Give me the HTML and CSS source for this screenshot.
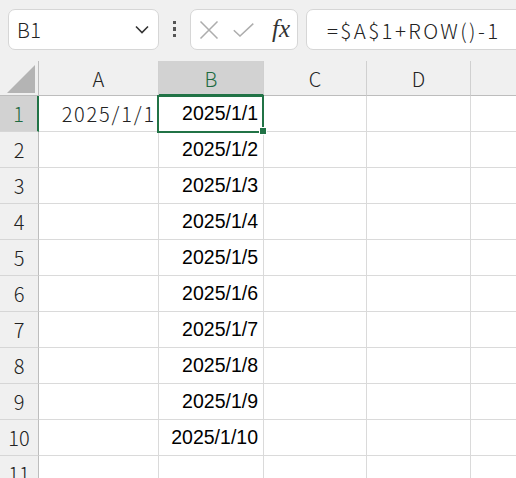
FILE: index.html
```html
<!DOCTYPE html>
<html lang="ja">
<head>
<meta charset="utf-8">
<link rel="stylesheet" href="styles.css">
</head>
<body>
<div class="app">
  <div class="topbar">
    <div class="namebox">
      <span class="name">B1</span>
      <svg class="chev" width="14" height="9" viewBox="0 0 14 9"><path d="M1 1.5 L7 7.5 L13 1.5" fill="none" stroke="#333" stroke-width="1.6"/></svg>
    </div>
    <div class="dots"><i></i><i></i><i></i></div>
    <div class="btnbox">
      <svg class="xicon" width="20" height="18" viewBox="0 0 20 18"><path d="M1.5 0.5 L18.5 17.5 M18.5 0.5 L1.5 17.5" stroke="#adadad" stroke-width="1.5" fill="none"/></svg>
      <svg class="ckicon" width="21" height="14" viewBox="0 0 21 14"><path d="M0.8 7.2 L7 13 L20.3 0.6" stroke="#adadad" stroke-width="1.5" fill="none"/></svg>
      <span class="fx">fx</span>
    </div>
    <div class="formula">=$A$1+ROW()-1</div>
  </div>
  <div class="sheet">
    <div class="corner"><span class="tri"></span></div>
    <div class="ch">A</div>
    <div class="ch sel">B</div>
    <div class="ch">C</div>
    <div class="ch">D</div>
    <div class="ch last"></div>

    <div class="rh sel">1</div>
    <div class="c jp">2025/1/1</div>
    <div class="c b active">2025/1/1<span class="ring"></span><span class="handle"></span></div>
    <div class="c"></div><div class="c"></div><div class="c last"></div>

    <div class="rh">2</div><div class="c"></div><div class="c b">2025/1/2</div><div class="c"></div><div class="c"></div><div class="c last"></div>
    <div class="rh">3</div><div class="c"></div><div class="c b">2025/1/3</div><div class="c"></div><div class="c"></div><div class="c last"></div>
    <div class="rh">4</div><div class="c"></div><div class="c b">2025/1/4</div><div class="c"></div><div class="c"></div><div class="c last"></div>
    <div class="rh">5</div><div class="c"></div><div class="c b">2025/1/5</div><div class="c"></div><div class="c"></div><div class="c last"></div>
    <div class="rh">6</div><div class="c"></div><div class="c b">2025/1/6</div><div class="c"></div><div class="c"></div><div class="c last"></div>
    <div class="rh">7</div><div class="c"></div><div class="c b">2025/1/7</div><div class="c"></div><div class="c"></div><div class="c last"></div>
    <div class="rh">8</div><div class="c"></div><div class="c b">2025/1/8</div><div class="c"></div><div class="c"></div><div class="c last"></div>
    <div class="rh">9</div><div class="c"></div><div class="c b">2025/1/9</div><div class="c"></div><div class="c"></div><div class="c last"></div>
    <div class="rh">10</div><div class="c"></div><div class="c b">2025/1/10</div><div class="c"></div><div class="c"></div><div class="c last"></div>
    <div class="rh">11</div><div class="c"></div><div class="c"></div><div class="c"></div><div class="c"></div><div class="c last"></div>
  </div>
</div>
</body>
</html>
```
FILE: styles.css
```css
html, body {
  margin: 0;
  padding: 0;
  width: 516px;
  height: 478px;
  overflow: hidden;
  background: #ffffff;
}
.app {
  width: 516px;
  height: 478px;
  overflow: hidden;
  font-family: "Noto Sans CJK JP", "Noto Sans", sans-serif;
  color: #222;
}
.topbar {
  height: 61px;
  box-sizing: border-box;
  background: #f0f0f0;
  display: flex;
  align-items: flex-start;
  padding: 9px 0 0 8px;
  overflow: hidden;
}
.topbar > * { flex: none; }
.namebox {
  width: 151px;
  height: 41px;
  box-sizing: border-box;
  background: #fff;
  border: 1px solid #d6d6d6;
  border-radius: 7px;
  display: flex;
  align-items: center;
  justify-content: space-between;
  padding: 0 9px 0 8px;
}
.name {
  font-size: 20px;
  font-weight: 300;
  color: #222;
  line-height: 1;
  letter-spacing: 0.5px;
}
.dots {
  width: 31px;
  height: 41px;
  display: flex;
  flex-direction: column;
  align-items: center;
  justify-content: center;
  gap: 3px;
  padding-bottom: 1px;
  box-sizing: border-box;
}
.dots i {
  display: block;
  width: 3.5px;
  height: 3.5px;
  background: #555;
}
.btnbox {
  width: 108px;
  height: 41px;
  box-sizing: border-box;
  background: #fff;
  border: 1px solid #d6d6d6;
  border-radius: 7px;
  display: flex;
  align-items: center;
  padding-left: 8px;
}
.xicon { margin-right: 14px; }
.ckicon { margin-right: 18px; margin-top: 1px; }
.fx {
  font-family: "Liberation Serif", "DejaVu Serif", serif;
  font-style: italic;
  font-size: 25px;
  color: #333;
  letter-spacing: 0;
  line-height: 1;
  margin-top: -3px;
}
.formula {
  margin-left: 8px;
  width: 260px;
  height: 41px;
  box-sizing: border-box;
  background: #fff;
  border: 1px solid #d6d6d6;
  border-radius: 7px;
  display: flex;
  align-items: center;
  padding-left: 20px;
  font-size: 20.5px;
  font-weight: 300;
  letter-spacing: 2.4px;
  color: #222;
  white-space: nowrap;
}
.sheet {
  display: grid;
  grid-template-columns: 39px 120px 105px 103px 104px 100px;
  grid-template-rows: 35px repeat(11, 36px);
}
.corner, .ch {
  background: #f0f0f0;
  border-bottom: 1px solid #bdbdbd;
  box-sizing: border-box;
}
.corner {
  border-right: 1px solid #bdbdbd;
  position: relative;
}
.tri {
  position: absolute;
  right: 3px;
  bottom: 2px;
  width: 0;
  height: 0;
  border-left: 28px solid transparent;
  border-bottom: 28px solid #b4b4b4;
}
.ch {
  border-right: 1px solid #d0d0d0;
  display: flex;
  align-items: center;
  justify-content: center;
  font-size: 20px;
  font-weight: 300;
  color: #222;
}
.ch.sel {
  background: #d2d2d2;
  color: #1e6b41;
  border-bottom: 2px solid #217346;
  padding-top: 1px;
}
.rh {
  background: #f0f0f0;
  border-right: 1px solid #bdbdbd;
  border-bottom: 1px solid #d6d6d6;
  box-sizing: border-box;
  display: flex;
  align-items: center;
  justify-content: center;
  font-size: 20px;
  font-weight: 300;
  color: #222;
}
.rh.sel {
  background: #d2d2d2;
  border-right: 2px solid #217346;
  color: #1e6b41;
}
.c {
  border-right: 1px solid #dadada;
  border-bottom: 1px solid #dadada;
  box-sizing: border-box;
  display: flex;
  align-items: center;
  justify-content: flex-end;
  padding-right: 5px;
  white-space: nowrap;
}
.c.last, .ch.last { border-right: none; }
.c.jp {
  font-size: 20px;
  font-weight: 300;
  letter-spacing: 1.8px;
  color: #222;
  padding-right: 2px;
}
.c.b {
  font-family: "Liberation Sans", Arial, sans-serif;
  font-size: 19.5px;
  color: #000;
}
.active { position: relative; }
.ring {
  position: absolute;
  left: -2px;
  top: -1px;
  right: -1px;
  bottom: -2px;
  border: 2px solid #217346;
  pointer-events: none;
}
.handle {
  position: absolute;
  right: -4px;
  bottom: -4px;
  width: 6px;
  height: 6px;
  background: #217346;
  border: 1px solid #fff;
}
```
